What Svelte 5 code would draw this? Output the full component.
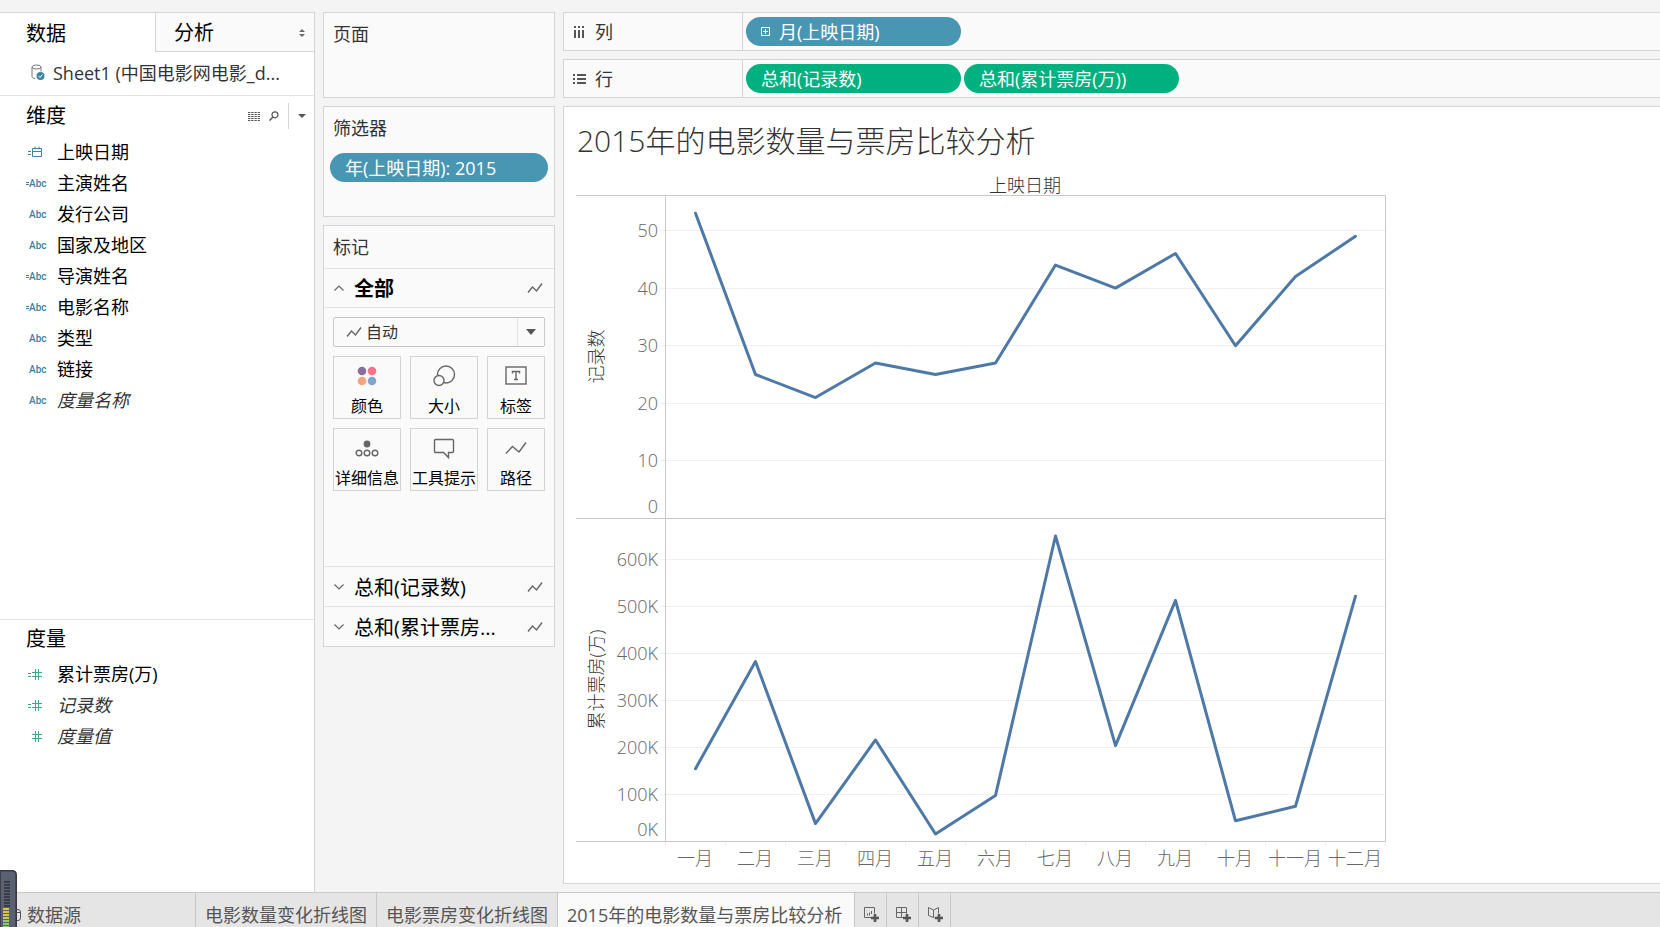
<script>
  const dimensions = [
    { name: '上映日期', type: 'date', calc: true },
    { name: '主演姓名', type: 'text', calc: true },
    { name: '发行公司', type: 'text' },
    { name: '国家及地区', type: 'text' },
    { name: '导演姓名', type: 'text', calc: true },
    { name: '电影名称', type: 'text', calc: true },
    { name: '类型', type: 'text' },
    { name: '链接', type: 'text' },
    { name: '度量名称', type: 'text', generated: true }
  ];

  const measures = [
    { name: '累计票房(万)', type: 'number', calc: true },
    { name: '记录数', type: 'number', calc: true, generated: true },
    { name: '度量值', type: 'number', generated: true }
  ];

  const markButtons = ['颜色', '大小', '标签', '详细信息', '工具提示', '路径'];
  const sheets = ['电影数量变化折线图', '电影票房变化折线图', '2015年的电影数量与票房比较分析'];

  let activeTab = $state('data');
  let activeSheet = $state(2);
  let markType = $state('auto');

  // chart geometry
  const left = 89;
  const right = 809;
  const step = 60;
  const months = ['一月', '二月', '三月', '四月', '五月', '六月', '七月', '八月', '九月', '十月', '十一月', '十二月'];

  const panes = [
    {
      title: '记录数',
      top: 18,
      bottom: 341,
      scale: 5.76,
      ticks: [0, 10, 20, 30, 40, 50],
      suffix: '',
      values: [53, 25, 21, 27, 25, 27, 44, 40, 46, 30, 42, 49]
    },
    {
      title: '累计票房(万)',
      top: 341,
      bottom: 664,
      scale: 0.47,
      ticks: [0, 100, 200, 300, 400, 500, 600],
      suffix: 'K',
      values: [155, 383, 38, 216, 16, 98, 650, 204, 513, 44, 75, 522]
    }
  ];

  const yOf = (pane, v) => pane.bottom - v * pane.scale;
  const pointsOf = (pane) =>
    pane.values.map((v, i) => `${left + 0.5 + step / 2 + i * step},${yOf(pane, v) + 0.5}`).join(' ');
</script>

{#snippet lineIcon(size)}
  <svg class="line-icon" width={size} height={size} viewBox="0 0 16 16">
    <path d="M1 12.5 L5.5 7 L9.5 11 L15 3.5" fill="none" stroke="#666" stroke-width="1.4" />
  </svg>
{/snippet}

{#snippet field(f)}
  <li class:generated={f.generated}>
    <svg class="type" width="20" height="20" viewBox="0 0 20 20" class:green={f.type === 'number'}>
      {#if f.type === 'date'}
        <path d="M3 9.5h3M3 12.5h3" />
        <path d="M7.500 6.500h9v8h-9zM7.500 9.500h9M10 4.500v3M14 4.500v3" />
      {:else if f.type === 'number'}
        {#if f.calc}<path d="M3 9.500h3M3 12.500h3" />{/if}
        <path d="M7 8.500h10M7 12.500h10M10.500 5v11M13.500 5v11" />
      {:else}
        {#if f.calc}<path d="M1 9.500h3M1 11.500h3" />{/if}
        <text x="4" y="14">Abc</text>
      {/if}
    </svg>
    <span>{f.name}</span>
  </li>
{/snippet}

<div class="app">
  <div class="workspace">
    <aside class="side">
      <div class="side-tabs">
        <button class:active={activeTab === 'data'} onclick={() => (activeTab = 'data')}>数据</button>
        <button class:active={activeTab === 'analysis'} onclick={() => (activeTab = 'analysis')}>
          分析
          <svg width="6" height="8" viewBox="0 0 6 8"><path d="M0 3L3 0L6 3ZM0 5L3 8L6 5Z" fill="#5b6b7b" /></svg>
        </button>
      </div>

      <div class="source">
        <svg width="14" height="17" viewBox="0 0 14 17">
          <path d="M1 3v9.500c0 1 1 1.800 3 2M10 3v4.500" fill="none" stroke="#777" />
          <ellipse cx="5.500" cy="3" rx="4.500" ry="2" fill="none" stroke="#777" />
          <circle cx="9.500" cy="12" r="4" fill="#3c84a6" />
          <path d="M7.500 12l1.500 1.500L11.500 10.500" fill="none" stroke="#fff" />
        </svg>
        <span>Sheet1 (中国电影网电影_d...</span>
      </div>

      <section class="dims">
        <header>
          <h2>维度</h2>
          <button class="tool" aria-label="查看数据">
            <svg width="12" height="9" viewBox="0 0 12 9">
              <path d="M0 .5h12M0 2.500h12M0 4.500h12M0 6.500h12M0 8.500h12" stroke="#555" stroke-dasharray="2.300 .93" />
            </svg>
          </button>
          <button class="tool" aria-label="查找字段">
            <svg width="10" height="10" viewBox="0 0 10 10">
              <circle cx="6" cy="3.800" r="3" fill="none" stroke="#555" stroke-width="1.200" />
              <path d="M4 6L.5 9.500" stroke="#555" stroke-width="1.500" />
            </svg>
          </button>
          <button class="tool menu" aria-label="菜单">
            <svg width="8" height="4" viewBox="0 0 8 4"><path d="M0 0h8L4 4z" fill="#555" /></svg>
          </button>
        </header>
        <ul>
          {#each dimensions as f}{@render field(f)}{/each}
        </ul>
      </section>

      <section class="measures">
        <header><h2>度量</h2></header>
        <ul>
          {#each measures as f}{@render field(f)}{/each}
        </ul>
      </section>
    </aside>

    <div class="cards">
      <section class="card pages"><h3>页面</h3></section>

      <section class="card filters">
        <h3>筛选器</h3>
        <button class="pill">年(上映日期): 2015</button>
      </section>

      <section class="card marks">
        <h3>标记</h3>
        <button class="mark-row all">
          <svg width="10" height="6" viewBox="0 0 10 6"><path d="M.5 5.500L5 1L9.500 5.500" fill="none" stroke="#666" stroke-width="1.200" /></svg>
          <span>全部</span>
          {@render lineIcon(16)}
        </button>

        <div class="marks-body">
          <div class="mark-type">
            {@render lineIcon(16)}
            <select bind:value={markType} aria-label="标记类型">
              <option value="auto">自动</option>
              <option value="line">线</option>
            </select>
            <svg class="arrow" width="10" height="6" viewBox="0 0 10 6"><path d="M0 0h10L5 6z" fill="#555" /></svg>
          </div>

          <div class="mark-grid">
            {#each markButtons as label, i}
              <button>
                <svg width="24" height="24" viewBox="0 0 24 24" fill="none" stroke="#666" stroke-width="1.400">
                  {#if i === 0}
                    <g stroke="none">
                      <circle cx="7" cy="7" r="4.300" fill="#8a6f9e" />
                      <circle cx="17" cy="7" r="4.300" fill="#fb7185" />
                      <circle cx="7" cy="17" r="4.300" fill="#f4a57c" />
                      <circle cx="17" cy="17" r="4.300" fill="#82a5cd" />
                    </g>
                  {:else if i === 1}
                    <circle cx="14" cy="10.500" r="8.500" />
                    <circle cx="7" cy="16.500" r="5" fill="#fafafa" />
                  {:else if i === 2}
                    <rect x="2" y="3" width="20" height="17" />
                    <path d="M8.500 9.500V7.500h7v2M12 7.500v8M10 15.500h4" />
                  {:else if i === 3}
                    <circle cx="12" cy="8" r="3.400" fill="#666" stroke="none" />
                    <circle cx="4" cy="17" r="2.800" />
                    <circle cx="12" cy="17" r="2.800" />
                    <circle cx="20" cy="17" r="2.800" />
                  {:else if i === 4}
                    <path d="M3.500 3.500h17a1 1 0 0 1 1 1v11a1 1 0 0 1-1 1H16.500v5l-5-5h-8a1 1 0 0 1-1-1v-11a1 1 0 0 1 1-1z" />
                  {:else}
                    <path d="M2 17.500L8.500 10.500L15 16L22 6.500" />
                  {/if}
                </svg>
                <span>{label}</span>
              </button>
            {/each}
          </div>
        </div>

        {#each ['总和(记录数)', '总和(累计票房...'] as label}
          <button class="mark-row">
            <svg width="10" height="6" viewBox="0 0 10 6"><path d="M.5 .5L5 5L9.500 .5" fill="none" stroke="#666" stroke-width="1.200" /></svg>
            <span>{label}</span>
            {@render lineIcon(16)}
          </button>
        {/each}
      </section>
    </div>

    <main class="view">
      <div class="shelf">
        <div class="shelf-name">
          <svg width="13" height="12" viewBox="0 0 13 12">
            <path d="M2 0v2M2 4v8M6 0v2M6 4v8M10 0v2M10 4v8" stroke="#555" stroke-width="2" />
          </svg>
          列
        </div>
        <div class="shelf-pills">
          <button class="pill">
            <svg width="9" height="9" viewBox="0 0 9 9" fill="none" stroke="#fff"><path d="M.5 .5h8v8h-8zM2 4.500h5M4.500 2v5" /></svg>
            月(上映日期)
          </button>
        </div>
      </div>

      <div class="shelf">
        <div class="shelf-name">
          <svg width="13" height="12" viewBox="0 0 13 12">
            <path d="M0 2h2M4 2h9M0 6h2M4 6h9M0 10h2M4 10h9" stroke="#555" stroke-width="2" />
          </svg>
          行
        </div>
        <div class="shelf-pills">
          <button class="pill green">总和(记录数)</button>
          <button class="pill green">总和(累计票房(万))</button>
        </div>
      </div>

      <div class="sheet">
        <h1>2015年的电影数量与票房比较分析</h1>
        <svg class="chart" width="810" height="692" viewBox="0 0 810 692">
          <text class="caption" x={(left + right) / 2} y="15" text-anchor="middle">上映日期</text>

          {#each panes as pane}
            {#each pane.ticks as t}
              {#if t > 0}
                <path class="grid" d="M{left - 5} {Math.round(yOf(pane, t))}.5H{right}" />
              {/if}
              <text class="tick" x={left - 7} y={(t > 0 ? Math.round(yOf(pane, t)) : pane.bottom - 12) + 7} text-anchor="end">{t}{pane.suffix}</text>
            {/each}
            <text class="caption" text-anchor="middle" transform="translate(27 {(pane.top + pane.bottom) / 2}) rotate(-90)">{pane.title}</text>
          {/each}

          <path class="frame" d="M0 18.500H809.500V664.500H0M0 341.500H809M{left}.5 18V664" />
          {#each panes as pane}
            <polyline points={pointsOf(pane)} />
          {/each}

          {#each months as m, i}
            <path class="grid" d="M{left + i * step}.5 665v4" />
            <text class="tick" x={left + step / 2 + i * step} y="688" text-anchor="middle">{m}</text>
          {/each}
          <path class="grid" d="M{right}.5 665v4" />
        </svg>
      </div>
    </main>
  </div>

  <footer>
    <button class="data-source">
      <svg width="8" height="12" viewBox="0 0 8 12" fill="none" stroke="#555"><rect x=".5" y=".5" width="7" height="11" rx="2.500" /><path d="M.5 3.500h7" /></svg>
      数据源
    </button>
    {#each sheets as s, i}
      <button class:active={activeSheet === i} onclick={() => (activeSheet = i)}>{s}</button>
    {/each}
    {#each ['新建工作表', '新建仪表板', '新建故事'] as label, i}
      <button class="new" aria-label={label}>
        <svg width="16" height="16" viewBox="0 0 16 16" fill="none" stroke="#666">
          {#if i === 0}
            <path d="M8.500 11.500h-7v-10h10v6M4.500 9.500v-2M6.500 9.500v-3M8.500 8v-3" />
          {:else if i === 1}
            <path d="M8.500 11.500h-7v-10h10v6M6.500 1.500v10M1.500 6.500h10" />
          {:else}
            <path d="M7.500 12L6.500 11.500L1.500 9.500v-8L6.500 4L11.500 1.500v6M6.500 4v7.500" />
          {/if}
          <path d="M12 8v8M8 12h8" stroke="#555" stroke-width="2.600" />
        </svg>
      </button>
    {/each}
  </footer>

  <!-- level meter docked over the corner -->
  <svg class="meter" width="18" height="57" viewBox="0 0 18 57">
    <path d="M0 .8H12Q16.200 .8 16.200 5V58H0Z" fill="#5c6172" stroke="#363943" stroke-width="1.600" />
    {#each Array(9) as _, i}
      <rect x="4" y={11 + i * 3} width="6" height="2" fill="#3a3d48" />
    {/each}
    {#each Array(7) as _, i}
      <rect x="3" y={38 + i * 3} width="6" height="2" fill={i < 4 ? '#d8c84a' : '#8fd068'} />
    {/each}
  </svg>
</div>

<style>
  :global(body) {
    background: #f4f4f4;
  }

  .app {
    position: relative;
    display: flex;
    flex-direction: column;
    box-sizing: border-box;
    min-height: 100vh;
    padding-top: 12px;
    font-family: "Open Sans", "Noto Sans CJK SC", sans-serif;
    font-size: 18px;
    line-height: 24px;
    color: #333;
    overflow: hidden;
  }

  .app * {
    box-sizing: border-box;
  }

  button,
  select {
    font: inherit;
    color: inherit;
    background: none;
    border: 0;
    margin: 0;
    padding: 0;
    text-align: left;
    white-space: nowrap;
  }

  h1, h2, h3, ul {
    margin: 0;
    padding: 0;
    font-weight: 400;
    list-style: none;
  }

  svg {
    flex: none;
  }

  .workspace {
    display: flex;
    flex: 1;
    gap: 8px;
  }

  /* data pane */
  .side {
    display: flex;
    flex-direction: column;
    width: 315px;
    flex: none;
    background: #fff;
    border: 1px solid #d4d4d4;
    border-width: 1px 1px 0 0;
    color: #000;
  }

  .side-tabs {
    display: flex;
    height: 39px;
    font-size: 20px;
  }

  .side-tabs button {
    display: flex;
    align-items: center;
    justify-content: space-between;
    flex: 1;
    padding: 2px 9px 0 18px;
    background: #fafafa;
    border: 1px solid #d4d4d4;
    border-width: 0 0 1px 1px;
  }

  .side-tabs button:first-child {
    flex: none;
    width: 155px;
    padding-left: 26px;
    border-left: 0;
  }

  .side-tabs button.active {
    background: #fff;
    border-bottom: 0;
  }

  .source {
    display: flex;
    align-items: center;
    gap: 8px;
    height: 44px;
    padding: 0 0 2px 31px;
    border-bottom: 1px solid #e2e2e2;
    color: #333;
  }

  .dims {
    flex: 1;
  }

  .measures {
    height: 273px;
    border-top: 1px solid #e2e2e2;
  }

  .side header {
    display: flex;
    align-items: center;
    height: 40px;
    padding-left: 26px;
  }

  .measures header {
    height: 38px;
  }

  h2 {
    flex: 1;
    font-size: 20px;
  }

  .tool {
    display: flex;
    align-items: center;
    height: 26px;
    padding-right: 9px;
  }

  .menu {
    padding: 0 8px 0 9px;
    border-left: 1px solid #d4d4d4;
  }

  li {
    display: flex;
    align-items: center;
    gap: 12px;
    height: 31px;
    padding-left: 25px;
  }

  .generated span {
    font-style: italic;
    color: #333;
  }

  .type {
    overflow: visible;
  }

  .type path {
    fill: none;
    stroke: #3c84a6;
  }

  .type.green path {
    stroke: #3fa687;
  }

  .type text {
    font-family: Roboto, sans-serif;
    font-size: 10px;
    font-weight: 500;
    fill: #3c7f9d;
  }

  /* cards */
  .cards {
    display: flex;
    flex-direction: column;
    gap: 8px;
    width: 232px;
    flex: none;
  }

  .card {
    background: #fafafa;
    border: 1px solid #d4d4d4;
  }

  h3 {
    padding-left: 9px;
    font-size: 18px;
    line-height: 42px;
  }

  .pages {
    height: 86px;
  }

  .filters {
    height: 111px;
  }

  .pill {
    display: flex;
    align-items: center;
    gap: 9px;
    height: 29px;
    padding: 0 15px;
    border-radius: 15px;
    background: #4996b2;
    color: #fff;
  }

  .filters .pill {
    width: 218px;
    margin: 4px 6px;
  }

  .mark-row {
    display: flex;
    align-items: center;
    gap: 10px;
    width: 100%;
    height: 40px;
    padding: 0 11px 0 10px;
    border-top: 1px solid #e2e2e2;
    font-size: 20px;
    color: #000;
  }

  .mark-row span {
    flex: 1;
    padding-top: 2px;
  }

  .mark-row.all {
    border-bottom: 1px solid #e2e2e2;
    font-weight: 700;
  }

  .marks-body {
    height: 258px;
    padding: 9px;
  }

  .mark-type {
    display: flex;
    align-items: center;
    height: 30px;
    margin-bottom: 9px;
    padding-left: 12px;
    border: 1px solid #c8c8c8;
    border-radius: 2px;
    font-size: 16px;
  }

  .mark-type select {
    flex: 1;
    height: 28px;
    padding-left: 4px;
    border-right: 1px solid #e2e2e2;
    appearance: none;
  }

  .arrow {
    margin: 0 8px;
  }

  .mark-grid {
    display: grid;
    grid-template-columns: 68px 68px 1fr;
    gap: 9px;
  }

  .mark-grid button {
    display: flex;
    flex-direction: column;
    align-items: center;
    height: 63px;
    padding-top: 7px;
    border: 1px solid #d4d4d4;
    font-size: 16px;
    color: #000;
  }

  .mark-grid span {
    margin-top: 6px;
  }

  /* shelves and sheet */
  .view {
    display: flex;
    flex-direction: column;
    gap: 8px;
    flex: 1;
    min-width: 0;
    padding-bottom: 8px;
  }

  .shelf {
    display: flex;
    height: 39px;
    background: #fafafa;
    border: 1px solid #d4d4d4;
    border-right: 0;
  }

  .shelf-name {
    display: flex;
    align-items: center;
    gap: 9px;
    width: 179px;
    padding-left: 9px;
    border-right: 1px solid #d4d4d4;
  }

  .shelf-pills {
    display: flex;
    align-items: center;
    gap: 3px;
    padding-left: 3px;
  }

  .shelf-pills .pill {
    width: 215px;
  }

  .pill.green {
    background: #00b180;
  }

  .sheet {
    flex: 1;
    padding-left: 12px;
    background: #fff;
    border: 1px solid #d4d4d4;
    border-right: 0;
  }

  h1 {
    padding: 0 0 2px 1px;
    font-size: 30px;
    font-weight: 300;
    line-height: 68px;
  }

  .chart {
    display: block;
    overflow: visible;
    font-size: 18px;
    font-weight: 300;
  }

  .caption {
    fill: #333;
  }

  .tick {
    fill: #666;
  }

  .grid {
    stroke: #f0f0f0;
  }

  .frame {
    fill: none;
    stroke: #c8c8c8;
  }

  polyline {
    fill: none;
    stroke: #4e79a7;
    stroke-width: 3;
    stroke-linejoin: round;
    stroke-linecap: round;
  }

  /* sheet tabs */
  footer {
    display: flex;
    height: 35px;
    background: #e5e5e5;
    border-top: 1px solid #c8c8c8;
    color: #555;
  }

  footer button {
    padding: 10px 9px 0;
    border-right: 1px solid #c8c8c8;
  }

  footer .data-source {
    display: flex;
    align-items: center;
    gap: 6px;
    width: 196px;
    padding-left: 13px;
  }

  footer .active {
    padding-right: 12px;
    background: #fafafa;
  }

  footer .new {
    width: 32px;
    padding: 10px 8px 0;
  }

  .meter {
    position: absolute;
    left: 0;
    bottom: 0;
  }
</style>
